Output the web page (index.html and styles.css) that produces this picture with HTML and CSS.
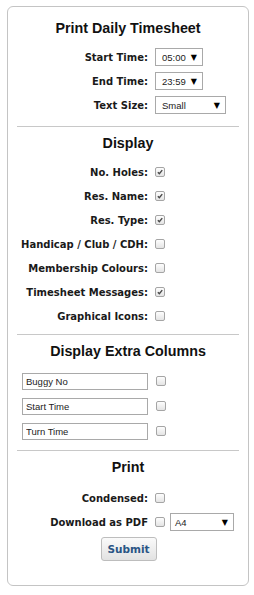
FILE: index.html
```html
<!DOCTYPE html>
<html>
<head>
<meta charset="utf-8">
<link rel="stylesheet" href="styles.css">
</head>
<body>
<div class="card">
  <section class="sec sec-first">
    <h2 class="title">Print Daily Timesheet</h2>
    <div class="rows">
      <div class="row"><span class="lbl">Start Time:</span><div class="select w48"><span>05:00</span><span class="arr">▼</span></div></div>
      <div class="row"><span class="lbl">End Time:</span><div class="select w48"><span>23:59</span><span class="arr">▼</span></div></div>
      <div class="row"><span class="lbl">Text Size:</span><div class="select w71"><span>Small</span><span class="arr">▼</span></div></div>
    </div>
  </section>
  <hr class="sep sep1">
  <section class="sec">
    <h2 class="title">Display</h2>
    <div class="rows">
      <div class="row"><span class="lbl">No. Holes:</span><span class="cb"><svg viewBox="0 0 10 10"><path d="M2.3 5.2 L4.2 7.2 L7.8 2.6"/></svg></span></div>
      <div class="row"><span class="lbl">Res. Name:</span><span class="cb"><svg viewBox="0 0 10 10"><path d="M2.3 5.2 L4.2 7.2 L7.8 2.6"/></svg></span></div>
      <div class="row"><span class="lbl">Res. Type:</span><span class="cb"><svg viewBox="0 0 10 10"><path d="M2.3 5.2 L4.2 7.2 L7.8 2.6"/></svg></span></div>
      <div class="row"><span class="lbl">Handicap / Club / CDH:</span><span class="cb"></span></div>
      <div class="row"><span class="lbl">Membership Colours:</span><span class="cb"></span></div>
      <div class="row"><span class="lbl">Timesheet Messages:</span><span class="cb"><svg viewBox="0 0 10 10"><path d="M2.3 5.2 L4.2 7.2 L7.8 2.6"/></svg></span></div>
      <div class="row"><span class="lbl">Graphical Icons:</span><span class="cb"></span></div>
    </div>
  </section>
  <hr class="sep sep2">
  <section class="sec">
    <h2 class="title">Display Extra Columns</h2>
    <div class="rows rows-in">
      <div class="row row-in"><input class="txt" type="text" value="Buggy No"><span class="cb cb-x"></span></div>
      <div class="row row-in"><input class="txt" type="text" value="Start Time"><span class="cb cb-x"></span></div>
      <div class="row row-in"><input class="txt" type="text" value="Turn Time"><span class="cb cb-x"></span></div>
    </div>
  </section>
  <hr class="sep sep3">
  <section class="sec">
    <h2 class="title">Print</h2>
    <div class="rows rows-print">
      <div class="row"><span class="lbl">Condensed:</span><span class="cb"></span></div>
      <div class="row"><span class="lbl">Download as PDF</span><span class="cb"></span><div class="select w64 sel-pdf"><span>A4</span><span class="arr">▼</span></div></div>
    </div>
    <div class="actions"><button class="btn" type="button">Submit</button></div>
  </section>
</div>
</body>
</html>
```
FILE: styles.css
```css
html, body {
  margin: 0;
  padding: 0;
  background: #fff;
}
body {
  font-family: "DejaVu Sans", Verdana, sans-serif;
  color: #1a1a1a;
}
.card {
  margin: 6px 0 0 7px;
  width: 242px;
  height: 580px;
  box-sizing: border-box;
  border: 1px solid #c4c4c4;
  border-radius: 6px;
  padding: 0 9px;
}
.sec { margin: 0; }
.title {
  margin: 6px 0 0;
  font-family: "Liberation Sans", Arial, sans-serif;
  font-weight: bold;
  font-size: 14.3px;
  line-height: 20px;
  text-align: center;
  color: #111;
}
.sec-first .title { margin-top: 11px; }
.rows {
  display: flex;
  flex-direction: column;
  margin-top: 7px;
}
.sec-first .rows { margin-top: 7px; }
.rows-in { margin-top: 8px; }
.rows-print { margin-top: 9px; }
.row {
  display: flex;
  align-items: center;
  height: 24px;
}
.row-in { height: 25px; }
.lbl {
  flex: none;
  width: 131px;
  text-align: right;
  font-weight: bold;
  font-size: 10px;
  color: #1a1a1a;
  white-space: nowrap;
}
.select {
  flex: none;
  box-sizing: border-box;
  height: 18px;
  margin-left: 7px;
  border: 1px solid #a9a9a9;
  background: #fff;
  display: flex;
  align-items: center;
  justify-content: space-between;
  padding: 0 5px 0 6px;
  font-family: "Liberation Sans", Arial, sans-serif;
  font-size: 9.5px;
  color: #222;
}
.w48 { width: 48px; }
.w71 { width: 71px; }
.w64 { width: 64px; }
.sel-pdf { margin-left: 5px; padding-left: 4px; }
.arr {
  font-size: 8px;
  color: #000;
  font-family: "DejaVu Sans", sans-serif;
}
.cb {
  flex: none;
  box-sizing: border-box;
  width: 10px;
  height: 10px;
  margin-left: 7px;
  border: 1px solid #a5a5a5;
  border-radius: 2px;
  background: linear-gradient(#fdfdfd, #e4e4e4);
  display: flex;
}
.cb svg {
  width: 8px;
  height: 8px;
}
.cb path {
  fill: none;
  stroke: #4a4a4a;
  stroke-width: 1.8;
}
.cb-x { margin-left: 8px; margin-top: -2px; }
.txt {
  box-sizing: border-box;
  width: 126px;
  height: 17px;
  margin: 0 0 0 5px;
  padding: 0 3px;
  border: 1px solid #a9a9a9;
  font-family: "Liberation Sans", Arial, sans-serif;
  font-size: 9.5px;
  color: #222;
  background: #fff;
  outline: none;
}
.sep {
  border: 0;
  border-top: 1px solid #c8c8c8;
  margin: 0;
  height: 0;
}
.sep1 { margin-top: 9px; }
.sep2 { margin-top: 6px; }
.sep3 { margin-top: 6px; }
.actions {
  display: flex;
  justify-content: center;
  margin-top: 3px;
}
.btn {
  width: 56px;
  height: 24px;
  box-sizing: border-box;
  border: 1px solid #bdbdbd;
  border-radius: 3px;
  background: linear-gradient(#fafafa, #e2e2e2);
  font-family: "DejaVu Sans", Verdana, sans-serif;
  font-weight: bold;
  font-size: 10.5px;
  color: #2a5585;
  padding: 0;
  margin-left: 1px;
}
```
